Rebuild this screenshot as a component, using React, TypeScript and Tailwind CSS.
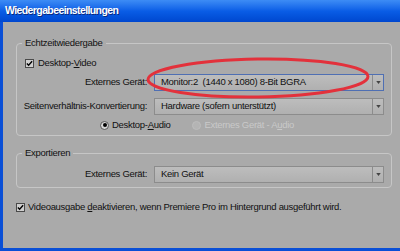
import React from 'react';

const font = { fontFamily: '"Liberation Sans", Arial, sans-serif' };

function Check() {
  return (
    <span className="flex h-[9px] w-[9px] shrink-0 items-center justify-center border border-[#4a4a4a] bg-[#cfcfcf]">
      <svg viewBox="0 0 8 8" className="h-[7px] w-[7px]">
        <path d="M1 4 L3 6 L7 1.5" fill="none" stroke="#000" strokeWidth="1.6" />
      </svg>
    </span>
  );
}

function Radio({ on, disabled }: { on?: boolean; disabled?: boolean }) {
  return (
    <span
      className={
        disabled
          ? 'flex h-[9px] w-[9px] shrink-0 items-center justify-center rounded-full border border-[#bdbdbd] bg-[#b4b4b4]'
          : 'flex h-[9px] w-[9px] shrink-0 items-center justify-center rounded-full border border-[#5a5a5a] bg-[#d6d6d6]'
      }
    >
      {on && <span className="h-[4px] w-[4px] rounded-full bg-black" />}
    </span>
  );
}

function Select({ value, focused }: { value: string; focused?: boolean }) {
  return (
    <div
      className={
        'flex h-[17px] w-[230px] items-stretch border bg-gradient-to-b from-[#bdbdbd] to-[#b0b0b0] ' +
        (focused ? 'border-[#4f6fb3]' : 'border-[#8c8c8c]')
      }
    >
      <span className="flex flex-1 items-center truncate whitespace-pre pl-[6px] text-[#111]">{value}</span>
      <span className="flex w-[11px] items-center justify-center border-l border-[#8c8c8c]">
        <svg viewBox="0 0 6 4" className="h-[3px] w-[5px]">
          <path d="M0 0 H6 L3 4 Z" fill="#444" />
        </svg>
      </span>
    </div>
  );
}

function Group({ title, children, className }: { title: string; children: React.ReactNode; className?: string }) {
  return (
    <fieldset className={'ml-[13px] mr-[8px] rounded-[4px] border border-[#c6c6c6] ' + (className ?? '')}>
      <legend className="ml-[5px] px-[3px] leading-[14px] text-[#111]">{title}</legend>
      {children}
    </fieldset>
  );
}

export default function App() {
  return (
    <div
      className="relative flex h-[251px] w-[400px] flex-col overflow-hidden bg-[#aaaaaa] text-[9.5px] tracking-[-0.3px]"
      style={font}
    >
      {/* Title bar */}
      <div className="flex h-[22px] items-center bg-gradient-to-b from-[#3d8cf5] via-[#0a5de6] to-[#0047cf] pl-[5px]">
        <span className="text-[10.5px] font-bold tracking-[-0.6px] text-white [text-shadow:1px_1px_0_#0a2a80]">
          Wiedergabeeinstellungen
        </span>
      </div>

      <div className="flex flex-1 flex-col border-b-[3px] border-l-[3px] border-[#0a4fd6]">
        <Group title="Echtzeitwiedergabe" className="mt-[14px] pb-[3px] pt-[6px]">
          <div className="flex h-[14px] items-center gap-[4px] pl-[8px] text-[#111]">
            <Check />
            <span>
              Desktop-<span className="underline">V</span>ideo
            </span>
          </div>

          <div className="mt-[4px] grid grid-cols-[130px_230px] items-center gap-x-[7px] gap-y-[7px] whitespace-nowrap text-[#111]">
            <span className="text-right">Externes Gerät:</span>
            <Select value="Monitor:2  (1440 x 1080) 8-Bit BGRA" focused />
            <span className="text-right">Seitenverhältnis-Konvertierung:</span>
            <Select value="Hardware (sofern unterstützt)" />
          </div>

          <div className="mt-[3px] flex h-[14px] items-center whitespace-nowrap">
            <div className="ml-[83px] flex items-center gap-[3px] text-[#111]">
              <Radio on />
              <span>
                Desktop-<span className="underline">A</span>udio
              </span>
            </div>
            <div className="ml-[22px] flex items-center gap-[3px] text-[#c9c9c9]">
              <Radio disabled />
              <span>
                Externes Gerät - A<span className="underline">u</span>dio
              </span>
            </div>
          </div>
        </Group>

        <Group title="Exportieren" className="mt-[10px] pb-[4px] pt-[6px]">
          <div className="grid grid-cols-[130px_230px] items-center gap-x-[7px] whitespace-nowrap text-[#111]">
            <span className="text-right">Externes Gerät:</span>
            <Select value="Kein Gerät" />
          </div>
        </Group>

        <div className="ml-[13px] mt-[12px] flex h-[14px] items-center gap-[3px] whitespace-nowrap text-[#111]">
          <Check />
          <span>
            Videoausgabe <span className="underline">d</span>eaktivieren, wenn Premiere Pro im Hintergrund ausgeführt wird.
          </span>
        </div>
      </div>

      {/* Red annotation ellipse drawn over the dialog */}
      <svg className="pointer-events-none absolute left-0 top-0" width="400" height="251">
        <ellipse
          cx="258"
          cy="78"
          rx="110"
          ry="19"
          transform="rotate(-0.8 258 78)"
          fill="none"
          stroke="#e3313b"
          strokeWidth="3"
        />
      </svg>
    </div>
  );
}
